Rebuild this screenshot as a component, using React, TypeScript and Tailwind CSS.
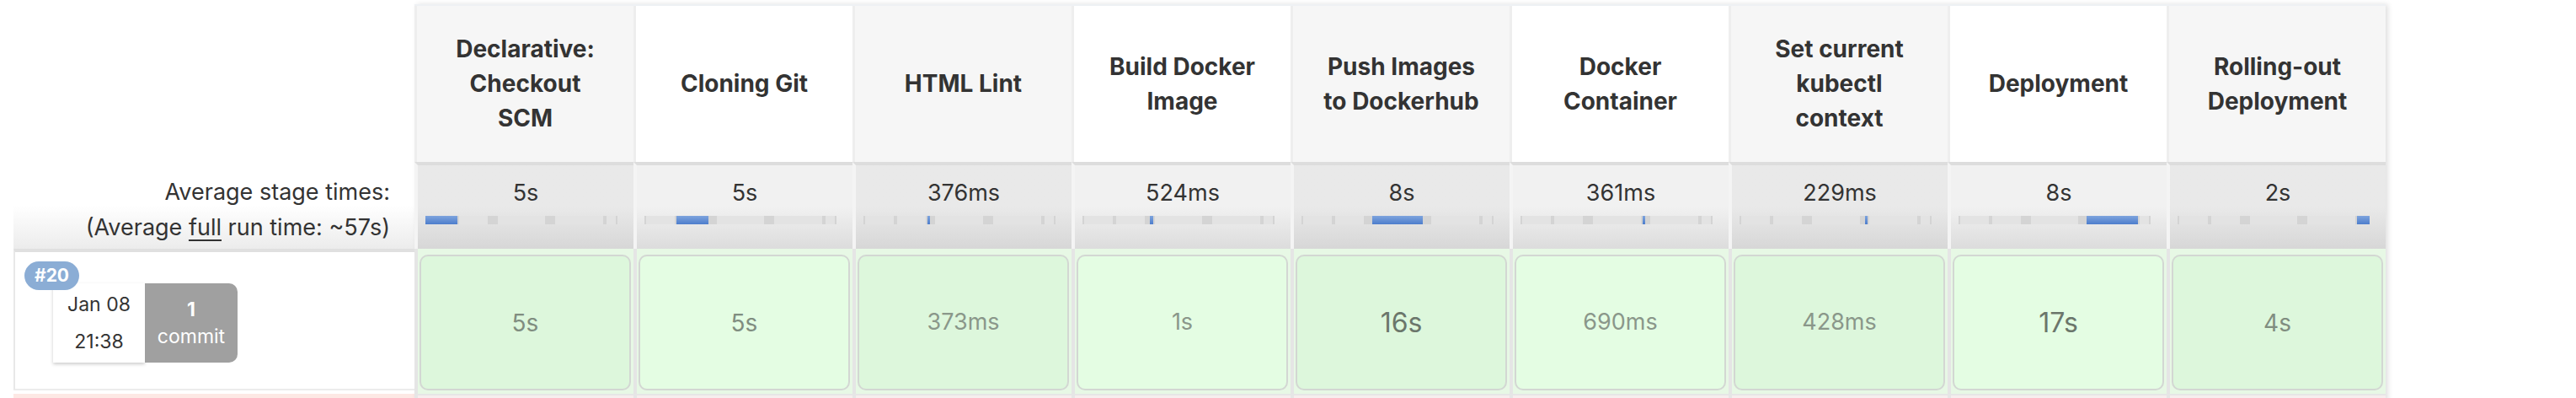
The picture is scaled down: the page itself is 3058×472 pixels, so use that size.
import React from "react";

type Stage = {
  lines: string[];
  avg: string;
  run: string;
  size: "sm" | "md" | "lg";
};

const stages: Stage[] = [
  { lines: ["Declarative:", "Checkout", "SCM"], avg: "5s", run: "5s", size: "md" },
  { lines: ["Cloning Git"], avg: "5s", run: "5s", size: "md" },
  { lines: ["HTML Lint"], avg: "376ms", run: "373ms", size: "sm" },
  { lines: ["Build Docker", "Image"], avg: "524ms", run: "1s", size: "sm" },
  { lines: ["Push Images", "to Dockerhub"], avg: "8s", run: "16s", size: "lg" },
  { lines: ["Docker", "Container"], avg: "361ms", run: "690ms", size: "sm" },
  { lines: ["Set current", "kubectl", "context"], avg: "229ms", run: "428ms", size: "sm" },
  { lines: ["Deployment"], avg: "8s", run: "17s", size: "lg" },
  { lines: ["Rolling-out", "Deployment"], avg: "2s", run: "4s", size: "md" },
];

// share of the whole run taken by each stage, for the little timeline bar
const shares = [5, 5, 0.376, 0.524, 8, 0.361, 0.229, 8, 2];
const total = shares.reduce((a, b) => a + b, 0);

const runText = {
  sm: "text-[27px] text-[#8a978a]",
  md: "text-[28px] text-[#808d80]",
  lg: "text-[32px] text-[#6b766b]",
};

function TimeBar({ active }: { active: number }) {
  return (
    <div className="ml-[9px] flex h-[10px] w-[228px] bg-[#d9d9d9]">
      {shares.map((s, i) => (
        <div
          key={i}
          style={{ width: `${(s / total) * 100}%` }}
          className={
            i === active
              ? "h-full min-w-[3px] bg-gradient-to-b from-[#7ea4dd] to-[#4d7dcc]"
              : "h-full border-x-[2px] border-[#d4d4d4] bg-[#e3e3e3]"
          }
        />
      ))}
    </div>
  );
}

function StageColumn({ stage, index }: { stage: Stage; index: number }) {
  const odd = index % 2 === 0;
  return (
    <div className="flex w-[260px] flex-col">
      {/* stage name */}
      <div
        className={`flex h-[185px] flex-col items-center justify-center border-l-[3px] border-[#eeeeee] text-center text-[28px] font-bold leading-[41px] text-[#333333] ${
          odd ? "bg-[#f6f6f6]" : "bg-white"
        }`}
      >
        {stage.lines.map((l) => (
          <span key={l}>{l}</span>
        ))}
      </div>

      {/* average time */}
      <div
        className={`h-[103px] border-l-[4px] border-t-[4px] border-l-[#f4f4f4] border-t-[#dddddd] bg-gradient-to-b ${
          odd ? "from-[#e9e9e9] via-[#e9e9e9] to-[#d7d7d7]" : "from-[#f1f1f1] via-[#f1f1f1] to-[#dcdcdc]"
        }`}
      >
        <div className="pt-[17px] text-center text-[27px] leading-[32px] text-[#333333]">{stage.avg}</div>
        <div className="mt-[11px]">
          <TimeBar active={index} />
        </div>
      </div>

      {/* build #20 */}
      <div className="flex h-[172px] border-l-[4px] border-[#e5e5e5] bg-[#e7f8e5] pb-[4px] pl-[2px] pr-[3px] pt-[7px]">
        <div
          className={`flex flex-1 items-center justify-center rounded-[10px] border-2 border-[#d3d7d3] ${
            odd ? "bg-[#ddf7dc]" : "bg-[#e4fde3]"
          } ${runText[stage.size]}`}
        >
          {stage.run}
        </div>
      </div>

      {/* next build, cut off */}
      <div className="h-[10px] border-l-[4px] border-t-[2px] border-[#e6e6e6] bg-[#f6eeee]" />
    </div>
  );
}

export default function App() {
  return (
    <div className="h-[472px] w-[3058px] overflow-hidden bg-white font-['Inter','Liberation_Sans',sans-serif] text-[#333333]">
      <div className="flex pl-4 pt-[5px]">
        {/* ── LEFT: labels + build info ───────────────────── */}
        <div className="flex w-[476px] flex-col">
          <div className="h-[187px]" />
          <div className="h-[103px] bg-gradient-to-b from-white via-white to-[#ececec] pr-[29px] pt-[15px] text-right text-[27px] leading-[42px]">
            <div>Average stage times:</div>
            <div>
              (Average <span className="underline decoration-2 underline-offset-[5px]">full</span> run time: ~57s)
            </div>
          </div>
          <div className="relative h-[168px] border-b-2 border-l-2 border-t-4 border-b-[#ececec] border-l-[#e8e8e8] border-t-[#e0e0e0] bg-white">
            <span className="absolute left-[11px] top-[11px] z-10 rounded-full bg-[#8badd5] px-[12px] text-[21px] font-bold leading-[34px] text-white">
              #20
            </span>
            <div className="ml-[45px] mt-[37px] flex h-[94px]">
              <div className="flex w-[109px] flex-col items-center justify-center gap-[20px] bg-white text-[23px] leading-[24px] shadow-[0_2px_4px_rgba(0,0,0,0.2)]">
                <span>Jan 08</span>
                <span>21:38</span>
              </div>
              <div className="flex w-[110px] flex-col items-center justify-center gap-[8px] rounded-r-[10px] bg-[#a0a0a0] text-[23px] leading-[24px] text-white">
                <span className="font-bold">1</span>
                <span>commit</span>
              </div>
            </div>
          </div>
          <div className="mt-[4px] h-[10px] bg-[#fde8e4]" />
        </div>

        {/* ── STAGES ──────────────────────────────────────── */}
        <div className="flex border-t-2 border-[#eef1f4] shadow-[3px_0_6px_rgba(0,0,0,0.12)]">
          {stages.map((s, i) => (
            <StageColumn key={i} stage={s} index={i} />
          ))}
        </div>
      </div>
    </div>
  );
}
